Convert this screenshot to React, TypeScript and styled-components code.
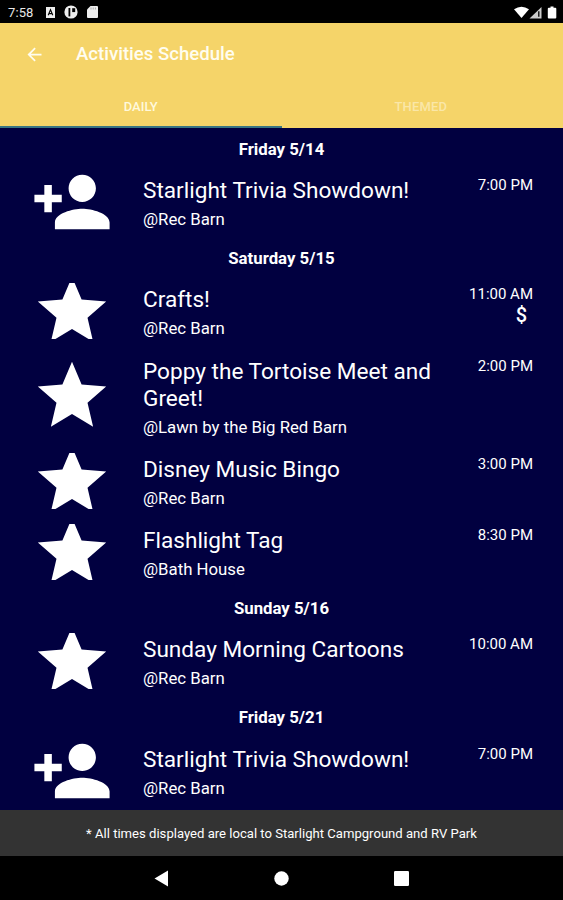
import React from "react";
import styled, { createGlobalStyle } from "styled-components";

const GlobalStyle = createGlobalStyle`
  * { box-sizing: border-box; }
  body { margin: 0; background: #000; }
`;

const Screen = styled.div`
  width: 563px;
  height: 900px;
  display: flex;
  flex-direction: column;
  overflow: hidden;
  background: #010040;
  color: #fff;
  font-family: Roboto, "Liberation Sans", sans-serif;
`;

const StatusBar = styled.header`
  height: 23px;
  flex: none;
  display: flex;
  align-items: center;
  justify-content: space-between;
  padding: 1px 6px 0 8px;
  background: #000;
  font-size: 13px;
  color: #e8e8e8;
`;

const StatusGroup = styled.div<{ $gap: number }>`
  display: flex;
  align-items: center;
  gap: ${(p) => p.$gap}px;
`;

const Clock = styled.span`
  width: 29px;
  letter-spacing: 0.1px;
`;

const AppBar = styled.div`
  height: 62px;
  flex: none;
  display: flex;
  align-items: center;
  padding-left: 24px;
  background: #f5d469;
`;

const Heading = styled.h1`
  margin: 0 0 0 31px;
  font-size: 18.6px;
  font-weight: 500;
  line-height: 22px;
  color: #fffdf0;
`;

const Tabs = styled.nav`
  height: 43px;
  flex: none;
  display: flex;
  background: #f5d469;
`;

const Tab = styled.div<{ $active?: boolean }>`
  width: 50%;
  display: flex;
  align-items: center;
  justify-content: center;
  font-size: 13px;
  font-weight: 500;
  padding: 1px ${(p) => (p.$active ? 0 : 3)}px 0 0;
  letter-spacing: ${(p) => (p.$active ? 0 : 0.15)}px;
  color: ${(p) => (p.$active ? "#fff9dc" : "#fae7a8")};
  border-bottom: 2px solid ${(p) => (p.$active ? "#397583" : "#f5d469")};
`;

const List = styled.main`
  flex: 1;
  min-height: 0;
  overflow: hidden;
  padding-top: 2px;
`;

const DayHeader = styled.h2`
  height: 38px;
  margin: 0;
  font-size: 16.8px;
  font-weight: 700;
  line-height: 38px;
  text-align: center;
`;

const Row = styled.div`
  display: grid;
  grid-template-columns: 143px 1fr auto;
  padding: 6.2px 30px 9.05px 0;
`;

/* Takes its height from the text beside it and clips a taller icon. */
const IconCell = styled.div`
  contain: size;
  display: flex;
  align-items: center;
  padding-left: 31px;
  overflow: hidden;
`;

const Details = styled.div`
  padding-top: 3px;
`;

const Title = styled.div`
  width: 300px;
  font-size: 22.6px;
  line-height: 27px;
`;

const Place = styled.div`
  margin-top: 5px;
  font-size: 16.8px;
  line-height: 21px;
`;

const When = styled.div`
  padding-top: 2px;
  font-size: 15px;
  line-height: 19px;
  text-align: right;
`;

const Fee = styled.div`
  padding-right: 6px;
  font-size: 20px;
  font-weight: 500;
  line-height: 22px;
`;

const Notice = styled.footer`
  height: 46px;
  flex: none;
  display: flex;
  align-items: center;
  justify-content: center;
  background: #333;
  font-size: 13.1px;
`;

const NavBar = styled.div`
  height: 44px;
  flex: none;
  display: flex;
  align-items: center;
  justify-content: center;
  gap: 105px;
  background: #000;
`;

const paths = {
  star: "M12 17.27L18.18 21l-1.64-7.03L22 9.24l-7.19-.61L12 2 9.19 8.63 2 9.24l5.46 4.73L5.82 21z",
  person:
    "M15 12c2.21 0 4-1.79 4-4s-1.79-4-4-4-4 1.79-4 4 1.79 4 4 4zM6.1 9.9V7H3.9v2.9H1v2.2h2.9V15h2.2v-2.9H9V9.9zM15 14c-2.67 0-8 1.34-8 4v2h16v-2c0-2.66-5.33-4-8-4z",
};

type Icon = keyof typeof paths;
type Event = { icon: Icon; title: string; place: string; time: string; paid?: boolean };

const schedule: { day: string; events: Event[] }[] = [
  {
    day: "Friday 5/14",
    events: [{ icon: "person", title: "Starlight Trivia Showdown!", place: "@Rec Barn", time: "7:00 PM" }],
  },
  {
    day: "Saturday 5/15",
    events: [
      { icon: "star", title: "Crafts!", place: "@Rec Barn", time: "11:00 AM", paid: true },
      { icon: "star", title: "Poppy the Tortoise Meet and Greet!", place: "@Lawn by the Big Red Barn", time: "2:00 PM" },
      { icon: "star", title: "Disney Music Bingo", place: "@Rec Barn", time: "3:00 PM" },
      { icon: "star", title: "Flashlight Tag", place: "@Bath House", time: "8:30 PM" },
    ],
  },
  {
    day: "Sunday 5/16",
    events: [{ icon: "star", title: "Sunday Morning Cartoons", place: "@Rec Barn", time: "10:00 AM" }],
  },
  {
    day: "Friday 5/21",
    events: [{ icon: "person", title: "Starlight Trivia Showdown!", place: "@Rec Barn", time: "7:00 PM" }],
  },
];

const EventIcon = styled.svg`
  width: 82px;
  height: 82px;
  flex: none;
  fill: #fff;
`;

const EventRow = ({ event }: { event: Event }) => (
  <Row>
    <IconCell>
      <EventIcon viewBox="0 0 24 24">
        <path d={paths[event.icon]} />
      </EventIcon>
    </IconCell>
    <Details>
      <Title>{event.title}</Title>
      <Place>{event.place}</Place>
    </Details>
    <When>
      {event.time}
      {event.paid && <Fee>$</Fee>}
    </When>
  </Row>
);

export default function App() {
  return (
    <Screen>
      <GlobalStyle />
      <StatusBar>
        <StatusGroup $gap={9}>
          <Clock>7:58</Clock>
          <svg width="9" height="11" viewBox="0 0 9 11">
            <path d="M0 0h9v11H0z" fill="#eee" />
            <path d="M2.2 8.3 4.5 2.8l2.3 5.5M3.1 6.6h2.8" fill="none" stroke="#000" strokeWidth="1.1" />
          </svg>
          <svg width="14" height="14" viewBox="0 0 14 14">
            <circle cx="7" cy="7" r="6.6" fill="#eee" />
            <path d="M5.4 3v8.4" fill="none" stroke="#000" strokeWidth="1.8" />
            <path d="M8.2 3.2h3v3.9h-3z" fill="#000" />
          </svg>
          <svg width="11" height="12" viewBox="0 0 11 12">
            <path d="M3.5 0H10a1 1 0 0 1 1 1v10a1 1 0 0 1-1 1H1a1 1 0 0 1-1-1V3.5z" fill="#eee" />
            <path d="M4 1.5v2M6.2 1.5v2M8.4 1.5v2" stroke="#999" strokeWidth=".8" />
          </svg>
        </StatusGroup>
        <StatusGroup $gap={0}>
          <svg width="43" height="13" viewBox="0 0 43 13">
            <path d="M0 3.3Q7.5-2 15 3.3L7.5 12z" fill="#fff" />
            <path d="M15.5 12.5 27.5 1v11.5z" fill="#ccc" />
            <path d="M24.8 5.2v5.6" stroke="#000" strokeWidth="1.3" />
            <path d="M34.8 1.7h1.7V.4h3v1.3h1.8a1 1 0 0 1 1 1v8.8a1 1 0 0 1-1 1h-6.5a1 1 0 0 1-1-1V2.7a1 1 0 0 1 1-1z" fill="#fff" />
          </svg>
        </StatusGroup>
      </StatusBar>
      <AppBar>
        <svg width="21" height="21" viewBox="0 0 24 24">
          <path d="M20 11H7.83l5.59-5.59L12 4l-8 8 8 8 1.41-1.41L7.83 13H20z" fill="#fffdf0" />
        </svg>
        <Heading>Activities Schedule</Heading>
      </AppBar>
      <Tabs>
        <Tab $active>DAILY</Tab>
        <Tab>THEMED</Tab>
      </Tabs>
      <List>
        {schedule.map((group) => (
          <React.Fragment key={group.day}>
            <DayHeader>{group.day}</DayHeader>
            {group.events.map((event) => (
              <EventRow key={event.title} event={event} />
            ))}
          </React.Fragment>
        ))}
      </List>
      <Notice>* All times displayed are local to Starlight Campground and RV Park</Notice>
      <NavBar>
        <svg width="15" height="17" viewBox="0 0 15 17">
          <path d="M14 .5v16L.5 8.5z" fill="#fff" />
        </svg>
        <svg width="15" height="15" viewBox="0 0 15 15">
          <circle cx="7.5" cy="7.5" r="7.2" fill="#fff" />
        </svg>
        <svg width="15" height="15" viewBox="0 0 15 15">
          <rect width="15" height="15" rx="1.2" fill="#fff" />
        </svg>
      </NavBar>
    </Screen>
  );
}
